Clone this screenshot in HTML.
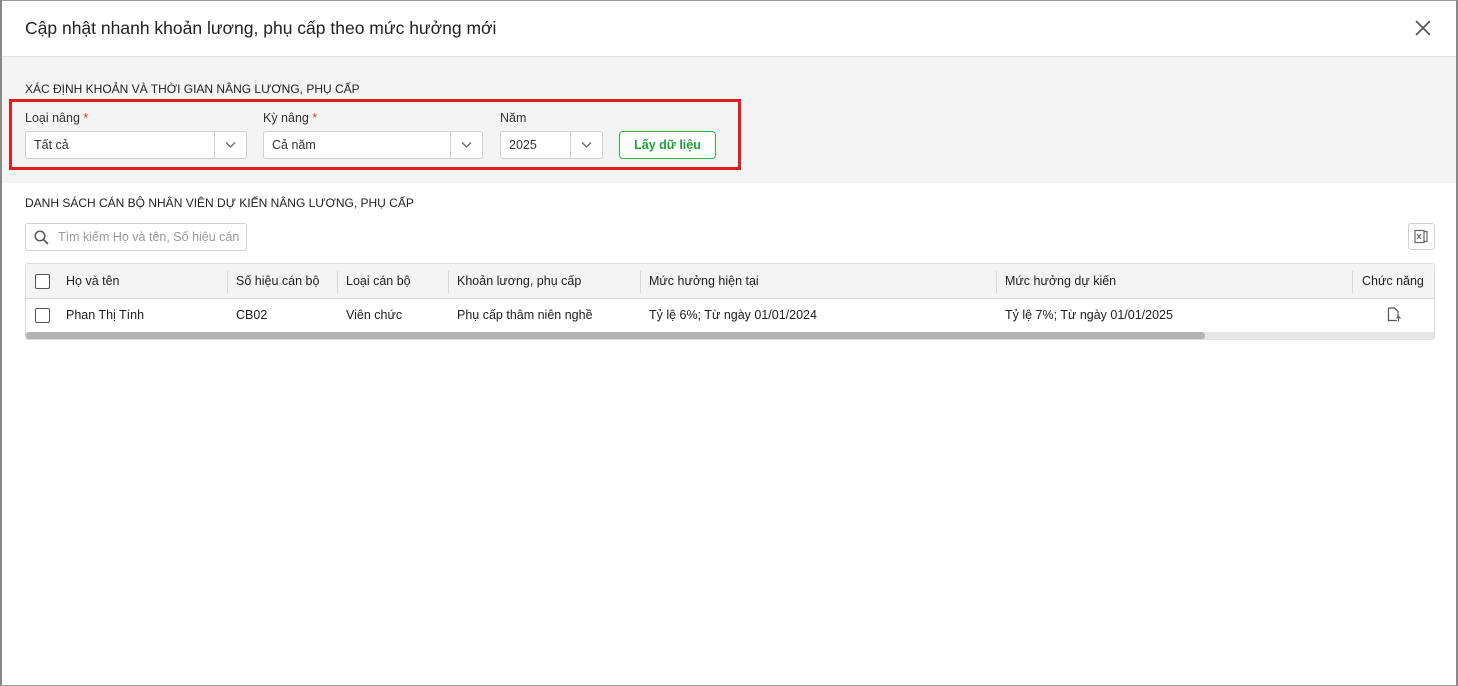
<!DOCTYPE html>
<html><head><meta charset="utf-8"><style>
*{box-sizing:border-box;margin:0;padding:0}
body{width:1458px;height:686px;background:#fff;font-family:"Liberation Sans",Arial,sans-serif;color:#212121;position:relative;overflow:hidden;font-size:12.5px}
.frame{position:absolute;left:0;top:0;width:1458px;height:686px;border:1px solid #9a9a9a;border-left:2px solid #888;border-right:2px solid #888}
.abs{position:absolute}
.title{left:25px;top:18px;font-size:17.5px;color:#222}
.hdr{left:2px;top:56px;width:1454px;height:1px;background:#e0e0e0}
.gray{left:2px;top:57px;width:1454px;height:126px;background:#f4f4f4}
.sec{font-size:12px;color:#222}
.lbl{font-size:12.5px;color:#333}
.req{color:#e53935}
.sel{background:#fff;border:1px solid #cfcfcf;border-radius:3px;height:28px;top:131px;font-size:12.5px;padding:6px 8px;color:#333}
.sel .dv{position:absolute;right:31px;top:0;bottom:0;width:1px;background:#cfcfcf}
.sel svg{position:absolute;right:10px;top:9px}
.btn{left:619px;top:131px;width:97px;height:28px;border:1px solid #2fb344;border-radius:4px;background:#fff;color:#1aa33a;font-weight:bold;font-size:12.5px;text-align:center;line-height:26px}
.red{left:9px;top:99px;width:732px;height:71px;border:3px solid #e01e1e}
.table{left:25px;top:263px;width:1410px;height:77px;border:1px solid #dcdcdc;border-radius:3px;overflow:hidden}
.th{position:absolute;top:0;height:35px;width:1410px;background:#f4f4f4;border-bottom:1px solid #dcdcdc}
.c{position:absolute;font-size:12.5px;white-space:nowrap}
.vd{position:absolute;top:7px;height:22px;width:1px;background:#d8d8d8}
.cb{position:absolute;width:15px;height:15px;border:1.5px solid #555;border-radius:2px;background:#fff}
</style></head><body>
<div class="frame"></div>
<div class="abs title">Cập nhật nhanh khoản lương, phụ cấp theo mức hưởng mới</div>
<svg class="abs" style="left:1415px;top:20px" width="16" height="16"><path d="M1 1L15 15M15 1L1 15" stroke="#555" stroke-width="1.6"/></svg>
<div class="abs hdr"></div>
<div class="abs gray"></div>
<div class="abs sec" style="left:25px;top:82px">XÁC ĐỊNH KHOẢN VÀ THỜI GIAN NÂNG LƯƠNG, PHỤ CẤP</div>
<div class="abs lbl" style="left:25px;top:111px">Loại nâng <span class="req">*</span></div>
<div class="abs lbl" style="left:263px;top:111px">Kỳ nâng <span class="req">*</span></div>
<div class="abs lbl" style="left:500px;top:111px">Năm</div>
<div class="abs sel" style="left:25px;width:222px">Tất cả<div class="dv"></div><svg width="11" height="8"><path d="M1 1.5L5.5 6L10 1.5" fill="none" stroke="#666" stroke-width="1.3"/></svg></div>
<div class="abs sel" style="left:263px;width:220px">Cả năm<div class="dv"></div><svg width="11" height="8"><path d="M1 1.5L5.5 6L10 1.5" fill="none" stroke="#666" stroke-width="1.3"/></svg></div>
<div class="abs sel" style="left:500px;width:103px">2025<div class="dv"></div><svg width="11" height="8"><path d="M1 1.5L5.5 6L10 1.5" fill="none" stroke="#666" stroke-width="1.3"/></svg></div>
<div class="abs btn">Lấy dữ liệu</div>
<div class="abs red"></div>
<div class="abs sec" style="left:25px;top:196px">DANH SÁCH CÁN BỘ NHÂN VIÊN DỰ KIẾN NÂNG LƯƠNG, PHỤ CẤP</div>
<div class="abs" style="left:25px;top:223px;width:222px;height:28px;border:1px solid #cfcfcf;border-radius:3px;background:#fff"></div>
<svg class="abs" style="left:34px;top:230px" width="15" height="15"><circle cx="6" cy="6" r="4.8" fill="none" stroke="#555" stroke-width="1.5"/><path d="M9.5 9.5L14 14" stroke="#555" stroke-width="1.6"/></svg>
<div class="abs" style="left:58px;top:230px;font-size:12.5px;color:#999;width:182px;overflow:hidden;white-space:nowrap">Tìm kiếm Họ và tên, Số hiệu cán bộ</div>
<div class="abs" style="left:1408px;top:223px;width:27px;height:27px;border:1px solid #cfcfcf;border-radius:3px;background:#fff"></div>
<svg class="abs" style="left:1414px;top:229px" width="15" height="15"><rect x="1" y="1.5" width="9" height="12" fill="none" stroke="#666" stroke-width="1.2"/><path d="M10 2.5h3v10h-3" fill="none" stroke="#666" stroke-width="1.2"/><path d="M3 5l4 5M7 5l-4 5" stroke="#666" stroke-width="1.1"/></svg>
<div class="abs table">
<div class="th"></div>
<div class="cb" style="left:9px;top:10px"></div>
<div class="c" style="left:40px;top:10px">Họ và tên</div>
<div class="vd" style="left:201px"></div><div class="c" style="left:210px;top:10px">Số hiệu cán bộ</div>
<div class="vd" style="left:311px"></div><div class="c" style="left:320px;top:10px">Loại cán bộ</div>
<div class="vd" style="left:422px"></div><div class="c" style="left:431px;top:10px">Khoản lương, phụ cấp</div>
<div class="vd" style="left:614px"></div><div class="c" style="left:623px;top:10px">Mức hưởng hiện tại</div>
<div class="vd" style="left:970px"></div><div class="c" style="left:979px;top:10px">Mức hưởng dự kiến</div>
<div class="vd" style="left:1326px"></div><div class="c" style="left:1336px;top:10px">Chức năng</div>
<div class="cb" style="left:9px;top:44px"></div>
<div class="c" style="left:40px;top:44px">Phan Thị Tính</div>
<div class="c" style="left:210px;top:44px">CB02</div>
<div class="c" style="left:320px;top:44px">Viên chức</div>
<div class="c" style="left:431px;top:44px">Phụ cấp thâm niên nghề</div>
<div class="c" style="left:623px;top:44px">Tỷ lệ 6%; Từ ngày 01/01/2024</div>
<div class="c" style="left:979px;top:44px">Tỷ lệ 7%; Từ ngày 01/01/2025</div>
<svg style="position:absolute;left:1361px;top:43px" width="14" height="15"><path d="M1.5 1h6l3.5 3.5v5M10 13.5H1.5V1" fill="none" stroke="#555" stroke-width="1.2"/><path d="M11.5 9.5v5M9.5 11.5l2-2 2 2" fill="none" stroke="#555" stroke-width="1.1"/></svg>
<div style="position:absolute;left:0;top:68px;width:1410px;height:8px;background:#e6e6e6"></div>
<div style="position:absolute;left:0;top:68px;width:1179px;height:8px;background:#b3b3b3;border-radius:4px"></div>
</div>
</body></html>
